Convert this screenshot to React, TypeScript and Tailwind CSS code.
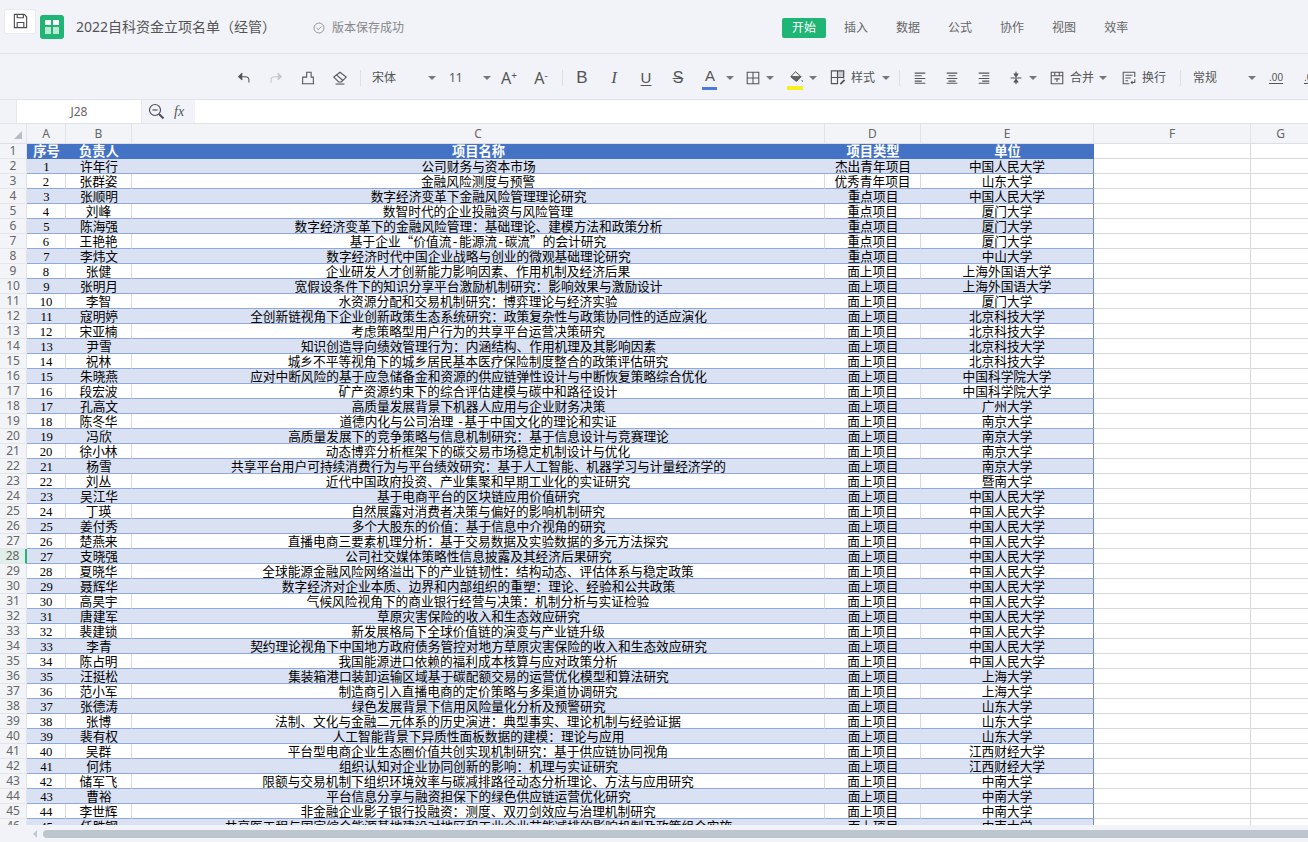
import type { ReactNode } from "react";

const rows: [string, string, string, string][] = [
  ["许年行", "公司财务与资本市场", "杰出青年项目", "中国人民大学"],
  ["张群姿", "金融风险测度与预警", "优秀青年项目", "山东大学"],
  ["张顺明", "数字经济变革下金融风险管理理论研究", "重点项目", "中国人民大学"],
  ["刘峰", "数智时代的企业投融资与风险管理", "重点项目", "厦门大学"],
  ["陈海强", "数字经济变革下的金融风险管理：基础理论、建模方法和政策分析", "重点项目", "厦门大学"],
  ["王艳艳", "基于企业“价值流-能源流-碳流”的会计研究", "重点项目", "厦门大学"],
  ["李炜文", "数字经济时代中国企业战略与创业的微观基础理论研究", "重点项目", "中山大学"],
  ["张健", "企业研发人才创新能力影响因素、作用机制及经济后果", "面上项目", "上海外国语大学"],
  ["张明月", "宽假设条件下的知识分享平台激励机制研究：影响效果与激励设计", "面上项目", "上海外国语大学"],
  ["李智", "水资源分配和交易机制研究：博弈理论与经济实验", "面上项目", "厦门大学"],
  ["寇明婷", "全创新链视角下企业创新政策生态系统研究：政策复杂性与政策协同性的适应演化", "面上项目", "北京科技大学"],
  ["宋亚楠", "考虑策略型用户行为的共享平台运营决策研究", "面上项目", "北京科技大学"],
  ["尹雪", "知识创造导向绩效管理行为：内涵结构、作用机理及其影响因素", "面上项目", "北京科技大学"],
  ["祝林", "城乡不平等视角下的城乡居民基本医疗保险制度整合的政策评估研究", "面上项目", "北京科技大学"],
  ["朱晓燕", "应对中断风险的基于应急储备金和资源的供应链弹性设计与中断恢复策略综合优化", "面上项目", "中国科学院大学"],
  ["段宏波", "矿产资源约束下的综合评估建模与碳中和路径设计", "面上项目", "中国科学院大学"],
  ["孔高文", "高质量发展背景下机器人应用与企业财务决策", "面上项目", "广州大学"],
  ["陈冬华", "道德内化与公司治理 -基于中国文化的理论和实证", "面上项目", "南京大学"],
  ["冯欣", "高质量发展下的竞争策略与信息机制研究：基于信息设计与竞赛理论", "面上项目", "南京大学"],
  ["徐小林", "动态博弈分析框架下的碳交易市场稳定机制设计与优化", "面上项目", "南京大学"],
  ["杨雪", "共享平台用户可持续消费行为与平台绩效研究：基于人工智能、机器学习与计量经济学的", "面上项目", "南京大学"],
  ["刘丛", "近代中国政府投资、产业集聚和早期工业化的实证研究", "面上项目", "暨南大学"],
  ["吴江华", "基于电商平台的区块链应用价值研究", "面上项目", "中国人民大学"],
  ["丁瑛", "自然展露对消费者决策与偏好的影响机制研究", "面上项目", "中国人民大学"],
  ["姜付秀", "多个大股东的价值：基于信息中介视角的研究", "面上项目", "中国人民大学"],
  ["楚燕来", "直播电商三要素机理分析：基于交易数据及实验数据的多元方法探究", "面上项目", "中国人民大学"],
  ["支晓强", "公司社交媒体策略性信息披露及其经济后果研究", "面上项目", "中国人民大学"],
  ["夏晓华", "全球能源金融风险网络溢出下的产业链韧性：结构动态、评估体系与稳定政策", "面上项目", "中国人民大学"],
  ["聂辉华", "数字经济对企业本质、边界和内部组织的重塑：理论、经验和公共政策", "面上项目", "中国人民大学"],
  ["高昊宇", "气候风险视角下的商业银行经营与决策：机制分析与实证检验", "面上项目", "中国人民大学"],
  ["唐建军", "草原灾害保险的收入和生态效应研究", "面上项目", "中国人民大学"],
  ["裴建锁", "新发展格局下全球价值链的演变与产业链升级", "面上项目", "中国人民大学"],
  ["李青", "契约理论视角下中国地方政府债务管控对地方草原灾害保险的收入和生态效应研究", "面上项目", "中国人民大学"],
  ["陈占明", "我国能源进口依赖的福利成本核算与应对政策分析", "面上项目", "中国人民大学"],
  ["汪挺松", "集装箱港口装卸运输区域基于碳配额交易的运营优化模型和算法研究", "面上项目", "上海大学"],
  ["范小军", "制造商引入直播电商的定价策略与多渠道协调研究", "面上项目", "上海大学"],
  ["张德涛", "绿色发展背景下信用风险量化分析及预警研究", "面上项目", "山东大学"],
  ["张博", "法制、文化与金融二元体系的历史演进：典型事实、理论机制与经验证据", "面上项目", "山东大学"],
  ["裴有权", "人工智能背景下异质性面板数据的建模：理论与应用", "面上项目", "山东大学"],
  ["吴群", "平台型电商企业生态圈价值共创实现机制研究：基于供应链协同视角", "面上项目", "江西财经大学"],
  ["何炜", "组织认知对企业协同创新的影响：机理与实证研究", "面上项目", "江西财经大学"],
  ["储军飞", "限额与交易机制下组织环境效率与碳减排路径动态分析理论、方法与应用研究", "面上项目", "中南大学"],
  ["曹裕", "平台信息分享与融资担保下的绿色供应链运营优化研究", "面上项目", "中南大学"],
  ["李世辉", "非金融企业影子银行投融资：测度、双刃剑效应与治理机制研究", "面上项目", "中南大学"],
  ["任胜钢", "共享医工程与国家综合能源基地建设对地区和工业企业节能减排的影响机制及政策组合实施", "面上项目", "中南大学"],
];

const tabs = ["插入", "数据", "公式", "协作", "视图", "效率"];

// quotes and hyphens are wider in the sheet's font than in Liberation Serif
function CellText({ text }: { text: string }) {
  return (
    <>
      {text.split(/([“”-])/).map((part, i) => {
        if (part === "-") return <span key={i} className="leading-none font-['Liberation_Mono']">-</span>;
        if (part === "“" || part === "”") return <span key={i} className="leading-none font-['Noto_Sans_CJK_SC']">{part}</span>;
        return part;
      })}
    </>
  );
}

function Icon({ children, size = 18, color = "#555" }: { children: ReactNode; size?: number; color?: string }) {
  return (
    <svg width={size} height={size} viewBox="0 0 18 18" fill="none" stroke={color} strokeWidth="1.2">
      {children}
    </svg>
  );
}

function Tool({ children, className = "w-8" }: { children: ReactNode; className?: string }) {
  return <div className={`h-6 shrink-0 flex items-center justify-center ${className}`}>{children}</div>;
}

function Caret({ className = "" }: { className?: string }) {
  return <div className={`shrink-0 w-0 h-0 border-x-[4px] border-x-transparent border-t-[4px] border-t-[#777] ${className}`} />;
}

function Divider({ className = "" }: { className?: string }) {
  return <div className={`shrink-0 w-px h-4 bg-[#dcdfe6] ${className}`} />;
}

function Letter({ children, className = "" }: { children: ReactNode; className?: string }) {
  return <span className={`text-[15px] leading-none text-[#555] ${className}`}>{children}</span>;
}

function TopBar() {
  return (
    <div className="h-[54px] shrink-0 flex items-start border-b border-[#e1e3ea] relative">
      <div className="ml-1 mt-[9px] w-8 h-[25px] bg-white border border-[#e8eaef] rounded-[2px] flex items-center justify-center">
        <Icon size={17} color="#4a4f57">
          <path d="M2.500 1.500h10.500l2.500 2.500v11.500h-13z" />
          <path d="M5.500 15.500v-5.500h7v5.500M5.500 1.500v3.500h6.500v-3.500" />
        </Icon>
      </div>
      <div className="ml-[4px] mt-[15px] w-6 h-6 rounded-[3px] bg-[#1fb574] flex items-center justify-center">
        <div className="grid grid-cols-2 gap-[2px] w-[14px]">
          <div className="h-[5px] bg-white" />
          <div className="h-[5px] bg-white" />
          <div className="h-[7px] bg-white/70" />
          <div className="h-[7px] bg-white/70" />
        </div>
      </div>
      <div className="ml-3 mt-[17px] text-[14px] leading-[20px] text-[#555] whitespace-nowrap">2022自科资金立项名单（经管）</div>
      <div className="ml-[37px] mt-[21px] flex items-center text-[12px] leading-[14px] text-[#888]">
        <svg width="12" height="12" viewBox="0 0 12 12" fill="none" stroke="#999" strokeWidth="1">
          <circle cx="6" cy="6" r="5" />
          <path d="M3.600 6.100l1.700 1.600 3-3.200" />
        </svg>
        <span className="ml-[7px] whitespace-nowrap">版本保存成功</span>
      </div>
      <div className="ml-[378px] mt-[17px] flex items-center text-[12px] text-[#666]">
        <div className="w-11 h-5 rounded-[2px] bg-[#1fb574] text-white flex items-center justify-center pt-px">开始</div>
        <div className="ml-[18px] flex gap-7 pt-px">
          {tabs.map((t) => (
            <span key={t} className="leading-5">{t}</span>
          ))}
        </div>
      </div>
    </div>
  );
}

function ToolBar() {
  return (
    <div className="h-[46px] shrink-0 flex items-center pl-[228px] pt-[2px] overflow-hidden text-[12px] text-[#555] border-b border-[#e1e3ea] whitespace-nowrap">
      <Tool>
        <Icon size={16} color="#555"><path d="M7 3.500L3 7.500l4 3.500" fill="#555" /><path d="M3.500 7.500h7c2.500 0 4 1.500 4 3.500v3" /></Icon>
      </Tool>
      <Tool>
        <Icon size={16} color="#c4c7cd"><path d="M11 3.500l4 4-4 3.500" fill="#c4c7cd" /><path d="M14.500 7.500h-7c-2.500 0-4 1.500-4 3.500v3" /></Icon>
      </Tool>
      <Tool>
        <Icon size={16}><path d="M2 15.500h14M3 15.500V8h4.500V2.500h5V8h2.500v7.500" /></Icon>
      </Tool>
      <Tool>
        <Icon size={16}><path d="M9 2.500l7 5.500-5.500 5.500h-3l-5.500-5.500z" /><path d="M5 5.500l7 6" /><path d="M4 15.800h10" /></Icon>
      </Tool>
      <Divider className="ml-1" />
      <div className="w-[79px] shrink-0 pl-[11px] flex items-center">
        <span>宋体</span>
        <Caret className="ml-[32px]" />
      </div>
      <div className="w-[53px] shrink-0 pl-[9px] flex items-center">
        <span>11</span>
        <Caret className="ml-[20px]" />
      </div>
      <Tool><Letter className="text-[16px]">A<sup className="text-[10px]">+</sup></Letter></Tool>
      <Tool><Letter className="text-[16px]">A<sup className="text-[10px]">-</sup></Letter></Tool>
      <Divider className="ml-[5px]" />
      <Tool className="w-8 ml-[3px]"><Letter className="font-['Liberation_Sans'] text-[17px]">B</Letter></Tool>
      <Tool><Letter className="font-['Liberation_Serif'] italic text-[17px]">I</Letter></Tool>
      <Tool><Letter className="font-['Liberation_Sans'] text-[15px] underline underline-offset-2">U</Letter></Tool>
      <Tool><Letter className="font-['Liberation_Sans'] text-[16px] line-through">S</Letter></Tool>
      <Tool className="w-8 relative">
        <Letter className="font-['Liberation_Sans'] text-[14px] -mt-1">A</Letter>
        <div className="absolute left-[8px] bottom-0 w-[15px] h-[3px] bg-[#4a7bdc]" />
      </Tool>
      <Caret />
      <Tool className="w-[30px] ml-[4px]">
        <Icon size={16}><path d="M2.500 2.500h13v13h-13zM9 2.500v13M2.500 9h13" /></Icon>
      </Tool>
      <Caret className="-ml-[2px]" />
      <Tool className="w-8 ml-[5px] relative">
        <svg width="15" height="15" viewBox="0 0 18 18" fill="none" stroke="#555" strokeWidth="1.200">
          <path d="M9 2l6.500 6-5.500 5.500L3.500 8z" />
          <path d="M3.500 8h12l-5.500 5.500z" fill="#666" />
          <path d="M16.500 12c.6.800.9 1.400.9 2" />
        </svg>
        <div className="absolute left-[8px] bottom-0 w-[16px] h-[4px] bg-[#f6f01e]" />
      </Tool>
      <Caret className="-ml-[2px]" />
      <Tool className="w-[28px] ml-[6px]">
        <Icon size={17}>
          <path d="M9 1.500h7.500v7H9z" fill="#c8ccd3" stroke="none" />
          <path d="M15.500 10V2H2.500v13.500h7M9 2v13.500M2.500 9h13" />
          <path d="M12 16l4.500-4.500" strokeWidth="2" />
        </Icon>
      </Tool>
      <span>样式</span>
      <Caret className="ml-[7px]" />
      <Divider className="ml-[9px]" />
      <Tool className="w-8 ml-1"><Icon size={16}><path d="M3 3.500h12M3 6.500h8M3 9.500h12M3 12.500h8M3 15h12" /></Icon></Tool>
      <Tool><Icon size={16}><path d="M3 3.500h12M5 6.500h8M3 9.500h12M5 12.500h8M3 15h12" /></Icon></Tool>
      <Tool><Icon size={16}><path d="M3 3.500h12M7 6.500h8M3 9.500h12M7 12.500h8M3 15h12" /></Icon></Tool>
      <Tool><Icon size={16}><path d="M3 9h12" /><path d="M9 2v3M9 16v-3" /><path d="M7 4.500h4l-2 3zM7 13.500h4l-2-3z" fill="#555" /></Icon></Tool>
      <Caret className="-ml-[3px]" />
      <Tool className="w-[28px] ml-[6px]"><Icon size={16}><path d="M2.500 2.500h13v13h-13zM2.500 6.500h13M6.500 2.500v4M11.500 2.500v4M6 10h6M9 10v3.500" /></Icon></Tool>
      <span className="-ml-px">合并</span>
      <Caret className="ml-[5px]" />
      <Tool className="w-[27px] ml-[8px]"><Icon size={16}><path d="M15.500 8V2.500h-13v13h7M5 6h8M5 9h6M5 12h3M15.500 10.500v3.500h-4M13 12.500l-1.500 1.500 1.500 1.500" /></Icon></Tool>
      <span>换行</span>
      <Divider className="ml-[14px]" />
      <div className="w-[72px] shrink-0 pl-3 flex items-center">
        <span>常规</span>
        <Caret className="ml-[31px]" />
      </div>
      <Tool className="w-8 ml-[7px]"><span className="text-[10px] leading-[11px] border-b border-[#555] font-['Liberation_Sans']">.00</span></Tool>
      <Tool><span className="text-[10px] leading-[11px] border-b border-[#555] font-['Liberation_Sans']">.0</span></Tool>
    </div>
  );
}

function FormulaBar() {
  return (
    <div className="h-[24px] shrink-0 flex border-b border-[#e1e3ea]">
      <div className="ml-4 w-[126px] bg-white border-x border-[#e6e8ee] flex items-center justify-center text-[12px] text-[#666]">J28</div>
      <div className="w-[53px] flex items-center">
        <svg className="ml-[6px]" width="17" height="17" viewBox="0 0 17 17" fill="none" stroke="#4a4f57" strokeWidth="1.200">
          <circle cx="7" cy="7" r="5.500" />
          <path d="M4.500 7h5" />
          <path d="M11 11l4.500 4.500" strokeWidth="2" />
        </svg>
        <span className="ml-[9px] font-['Liberation_Serif'] italic text-[14px] text-[#555]">fx</span>
      </div>
      <div className="flex-1 bg-white" />
    </div>
  );
}

function ColHead() {
  const heads: [string, string][] = [
    ["A", "w-[39px]"],
    ["B", "w-[66px]"],
    ["C", "w-[693px]"],
    ["D", "w-[96px]"],
    ["E", "w-[173px]"],
    ["F", "w-[157px]"],
    ["G", "w-[60px]"],
  ];
  return (
    <div className="h-5 shrink-0 flex bg-[#f3f4f8] border-b border-[#dcdfe6] text-[12px] text-[#666]">
      <div className="w-[27px] shrink-0 border-r border-[#e1e3e8] flex items-end justify-end pr-[4px] pb-[4px]">
        <div className="w-0 h-0 border-l-[8px] border-l-transparent border-b-[8px] border-b-[#b9bcc2]" />
      </div>
      {heads.map(([name, w]) => (
        <div key={name} className={`${w} shrink-0 border-r border-[#e1e3e8] flex items-center justify-center font-['Noto_Sans']`}>
          {name}
        </div>
      ))}
    </div>
  );
}

function RowNum({ n }: { n: number }) {
  const active = n === 28;
  return (
    <div className={`w-[27px] shrink-0 flex items-center justify-center text-[12px] text-[#666] font-['Noto_Sans'] border-b border-[#e4e6eb] ${active ? "bg-[#e1efea] border-r-2 border-r-[#2bb17b]" : "bg-[#f3f4f8] border-r border-r-[#e1e3e8]"}`}>
      {n}
    </div>
  );
}

function EmptyCols() {
  return (
    <>
      <div className="w-[157px] shrink-0 bg-white border-r border-b border-[#d9d9d9]" />
      <div className="w-[60px] shrink-0 bg-white border-b border-[#d9d9d9]" />
    </>
  );
}

function SheetRow({ n, row }: { n: number; row: [string, string, string, string] }) {
  const seq = n - 1;
  const blue = seq % 2 === 1;
  const cell = `shrink-0 text-center overflow-hidden leading-[17px] border-b border-[#8ea9db] ${blue ? "bg-[#d9e1f2]" : "bg-white border-r border-r-[#d9d9d9]"}`;
  return (
    <div className="h-[15px] flex text-[12.7px] text-black whitespace-nowrap">
      <RowNum n={n} />
      <div className={`w-[39px] ${cell}`}>{seq}</div>
      <div className={`w-[66px] ${cell}`}>{row[0]}</div>
      <div className={`w-[693px] ${cell}`}><CellText text={row[1]} /></div>
      <div className={`w-[96px] ${cell}`}>{row[2]}</div>
      <div className={`w-[173px] shrink-0 text-center overflow-hidden leading-[17px] border-b border-b-[#8ea9db] border-r border-r-[#6f8fc6] ${blue ? "bg-[#d9e1f2]" : "bg-white"}`}>{row[3]}</div>
      <EmptyCols />
    </div>
  );
}

function Sheet() {
  const titles: [string, string][] = [
    ["序号", "w-[39px]"],
    ["负责人", "w-[66px]"],
    ["项目名称", "w-[693px]"],
    ["项目类型", "w-[96px]"],
    ["单位", "w-[173px]"],
  ];
  return (
    <div className="flex-1 overflow-hidden font-['Liberation_Serif','Noto_Sans_CJK_SC',serif]">
      <div className="h-[15px] flex whitespace-nowrap">
        <RowNum n={1} />
        {titles.map(([t, w]) => (
          <div key={t} className={`${w} shrink-0 bg-[#4472c4] text-white font-bold text-[13.3px] leading-[15px] text-center`}>{t}</div>
        ))}
        <EmptyCols />
      </div>
      {rows.map((row, i) => (
        <SheetRow key={i} n={i + 2} row={row} />
      ))}
    </div>
  );
}

function ScrollBar() {
  return (
    <div className="h-[17px] shrink-0 flex items-center bg-[#f1f3f8] pl-[33px]">
      <div className="w-0 h-0 border-y-[4px] border-y-transparent border-r-[4px] border-r-[#c3c8d0]" />
      <div className="ml-[6px] flex-1 h-2 rounded-l-[4px] bg-[#bdc5cf]" />
    </div>
  );
}

export default function App() {
  return (
    <div className="w-[1308px] h-[842px] overflow-hidden flex flex-col bg-[#f1f3f8] font-['Noto_Sans','Noto_Sans_CJK_SC',sans-serif]">
      <TopBar />
      <ToolBar />
      <FormulaBar />
      <ColHead />
      <Sheet />
      <ScrollBar />
    </div>
  );
}
